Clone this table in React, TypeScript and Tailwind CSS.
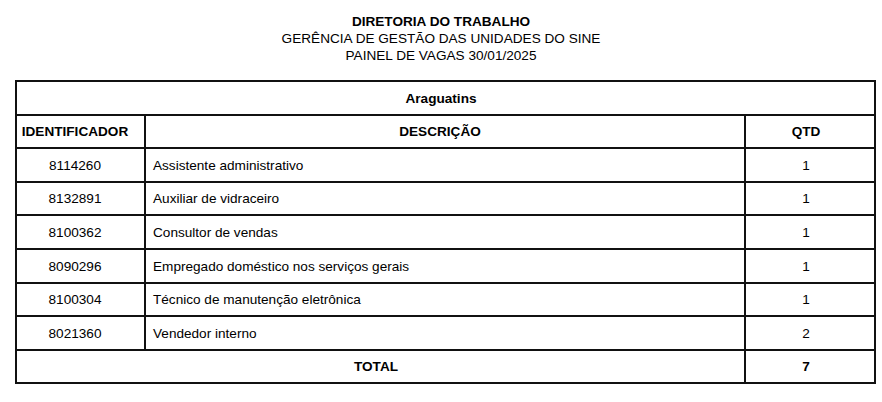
const ROWS = [
  { id: '8114260', desc: 'Assistente administrativo', qtd: 1 },
  { id: '8132891', desc: 'Auxiliar de vidraceiro', qtd: 1 },
  { id: '8100362', desc: 'Consultor de vendas', qtd: 1 },
  { id: '8090296', desc: 'Empregado doméstico nos serviços gerais', qtd: 1 },
  { id: '8100304', desc: 'Técnico de manutenção eletrônica', qtd: 1 },
  { id: '8021360', desc: 'Vendedor interno', qtd: 2 },
];

export default function App() {
  const total = ROWS.reduce((s, r) => s + r.qtd, 0);

  return (
    <div className="w-[882px] h-[402px] bg-white text-[13.6px] text-black font-['Liberation_Sans',Arial,sans-serif]">
      {/* Header */}
      <div className="pt-[13px] text-center leading-[17px]">
        <p className="font-bold">DIRETORIA DO TRABALHO</p>
        <p>GERÊNCIA DE GESTÃO DAS UNIDADES DO SINE</p>
        <p>PAINEL DE VAGAS 30/01/2025</p>
      </div>

      {/* Table */}
      <div className="px-[15px] mt-[16px]">
        <table className="w-[859px] border-collapse border-2 border-[#111] table-fixed [&_td]:pt-[2px]">
          <colgroup>
            <col className="w-[129px]" />
            <col className="w-[600px]" />
            <col className="w-[130px]" />
          </colgroup>
          <tbody>
            <tr className="h-[33.6px]">
              <td colSpan={3} className="border-2 border-[#111] text-center pr-[9px] font-bold">
                Araguatins
              </td>
            </tr>
            <tr className="h-[33.6px] font-bold">
              <td className="border-2 border-[#111] text-center pr-[11px]">IDENTIFICADOR</td>
              <td className="border-2 border-[#111] text-center pr-[10px]">DESCRIÇÃO</td>
              <td className="border-2 border-[#111] text-center pr-[8px]">QTD</td>
            </tr>
            {ROWS.map((r) => (
              <tr key={r.id} className="h-[33.6px]">
                <td className="border-2 border-[#111] text-center pr-[11px]">{r.id}</td>
                <td className="border-2 border-[#111] pl-[7px]">{r.desc}</td>
                <td className="border-2 border-[#111] text-center pr-[8px]">{r.qtd}</td>
              </tr>
            ))}
            <tr className="h-[33.6px] font-bold">
              <td colSpan={2} className="border-2 border-[#111] text-center pr-[9px]">
                TOTAL
              </td>
              <td className="border-2 border-[#111] text-center pr-[8px]">{total}</td>
            </tr>
          </tbody>
        </table>
      </div>
    </div>
  );
}
